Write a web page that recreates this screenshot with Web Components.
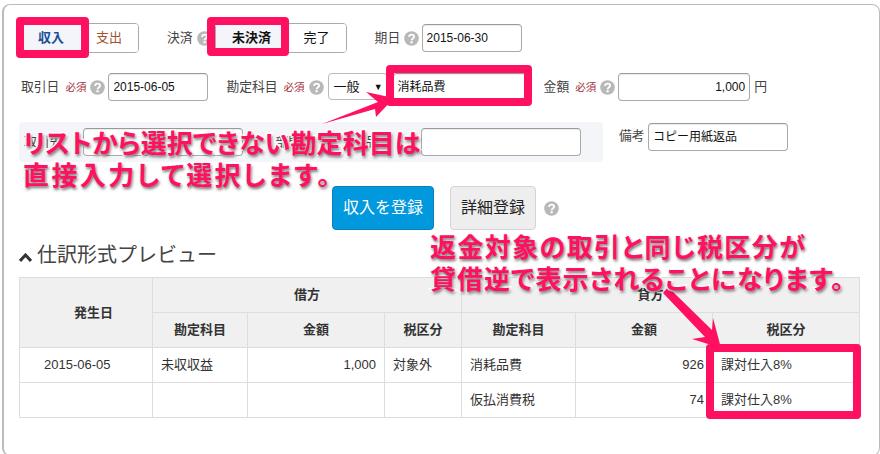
<!DOCTYPE html>
<html lang="ja">
<head>
<meta charset="utf-8">
<title>取引登録</title>
<style>
html,body{margin:0;padding:0;background:#fff;overflow:hidden}
body{width:880px;height:454px;font:13px/18px "Liberation Sans","Noto Sans CJK JP",sans-serif;color:#333}
</style>
</head>
<body>
<entry-screen>
  <ui-card>
    <form-row style="height:30px;margin-top:18px">
      <seg-group style="margin-left:2px">
        <seg-btn active tone="blue" w="58">収入</seg-btn>
        <seg-btn tone="brown" w="58">支出</seg-btn>
      </seg-group>
      <field-label style="margin-left:28px">決済</field-label><help-mark style="margin-left:4px"></help-mark>
      <seg-group style="margin-left:3px">
        <seg-btn active tone="black" w="72" bold>未決済</seg-btn>
        <seg-btn tone="black" w="58">完了</seg-btn>
      </seg-group>
      <field-label style="margin-left:28px">期日</field-label><help-mark style="margin-left:3.4px"></help-mark>
      <text-box w="100" style="margin-left:3px">2015-06-30</text-box>
    </form-row>
    <form-row style="height:28px;margin-top:20px">
      <field-label style="margin-left:2px">取引日</field-label><req-tag style="margin-left:6px"></req-tag><help-mark style="margin-left:4px"></help-mark>
      <text-box w="100" style="margin-left:3px">2015-06-05</text-box>
      <field-label style="margin-left:18px">勘定科目</field-label><req-tag style="margin-left:6px"></req-tag><help-mark style="margin-left:4px"></help-mark>
      <select-box style="margin-left:4px">一般</select-box>
      <text-box w="134" style="margin-left:5px">消耗品費</text-box>
      <field-label style="margin-left:17px">金額</field-label><req-tag style="margin-left:6px"></req-tag><help-mark style="margin-left:4px"></help-mark>
      <text-box w="132" right style="margin-left:3px">1,000</text-box>
      <field-label style="margin-left:4px">円</field-label>
    </form-row>
    <form-row style="height:40px;margin-top:21px;align-items:flex-start">
      <tint-panel>
        <field-label style="margin-left:5px">取引先</field-label>
        <text-box w="160" style="margin-left:21px"></text-box>
        <field-label style="margin-left:32px">部門</field-label>
        <field-label style="margin-left:64px">品目</field-label>
        <text-box w="160" style="margin-left:30px"></text-box>
      </tint-panel>
      <field-label style="margin-left:16px;margin-top:5px">備考</field-label>
      <text-box w="140" style="margin-left:3.4px;margin-top:1px">コピー用紙返品</text-box>
    </form-row>
    <form-row style="height:44px;margin-top:24px">
      <action-btn primary w="102" style="margin-left:313px">収入を登録</action-btn>
      <action-btn w="86" style="margin-left:16px">詳細登録</action-btn>
      <help-mark style="margin-left:8px"></help-mark>
    </form-row>
    <section-head>仕訳形式プレビュー</section-head>
    <journal-table style="margin-top:10px"></journal-table>
  </ui-card>
  <hl-box x="16" y="17" w="73" h="41"></hl-box>
  <hl-box x="207" y="17" w="82" h="39"></hl-box>
  <hl-box x="386" y="65" w="146" h="41"></hl-box>
  <hl-box x="706" y="344" w="155" h="75"></hl-box>
  <note-arrow points="322,124 378,102 366,92 394,98 376,117 375,109"></note-arrow>
  <note-arrow points="668,287 712,330 713,318 721,348 692,339 705,337 663,293"></note-arrow>
  <call-out x="23" y="126" pitch="32">
    <span style="letter-spacing:.1px">リストから選択できない勘定科目は</span>
    <span style="letter-spacing:2.4px">直接入力して選択します。</span>
  </call-out>
  <call-out x="430" y="229" pitch="33">
    <span style="letter-spacing:1.4px">返金対象の取引と同じ税区分が</span>
    <span style="letter-spacing:1px;margin-top:-1px">貸借逆で表示されることになります。</span>
  </call-out>
</entry-screen>
<script>
function def(name, css, html, init){
  customElements.define(name, class extends HTMLElement{
    constructor(){super();const s=this.attachShadow({mode:'open'});s.innerHTML='<style>'+css+'</style>'+html;}
    connectedCallback(){if(init)init(this,this.shadowRoot);}
  });
}
const FONT='"Liberation Sans","Noto Sans CJK JP",sans-serif';
def('entry-screen',':host{display:block;position:relative;width:880px;height:454px;overflow:hidden;font-family:'+FONT+'}','<slot></slot>');
def('ui-card',':host{display:block;box-sizing:border-box;margin:4px 0 0 2px;width:878px;height:452px;border:1px solid #bbb;border-width:1px 1px 1px 2px;border-radius:8px;padding:0 0 0 15px}','<slot></slot>');
def('form-row',':host{display:flex;align-items:center}','<slot></slot>');
def('seg-group',':host{display:inline-flex;flex:none;height:30px;box-sizing:border-box;border:1px solid #aaa;border-radius:4px;overflow:hidden}','<slot></slot>');
def('seg-btn',':host{display:flex;align-items:center;justify-content:center;box-sizing:border-box;height:100%;font-size:13px;line-height:18px;background:#fff}:host([active]){background:#f3f5fa;font-weight:700}:host([tone=blue]){color:#1b4f94}:host([tone=brown]){color:#a0522d}:host([tone=black]){color:#111}','<slot></slot>',(h)=>{h.style.width=h.getAttribute('w')+'px'});
def('field-label',':host{display:inline-block;flex:none;font-size:12.8px;line-height:18px;color:#444;white-space:nowrap}','<slot></slot>');
def('req-tag',':host{display:inline-block;flex:none;font-size:10.5px;line-height:14px;color:#a0303a;white-space:nowrap}','必須');
def('help-mark',':host{display:inline-flex;width:15px;height:15px;flex:none}svg{display:block}','<svg width="15" height="15" viewBox="0 0 15 15"><circle cx="7.5" cy="7.5" r="7.3" fill="#b8b8b8"/><path d="M5 5.8c.2-1.5 1.2-2.2 2.6-2.2s2.5.8 2.5 2c0 1.9-2.5 1.8-2.5 3.6" fill="none" stroke="#fff" stroke-width="1.9"/><rect x="6.5" y="10.2" width="2.2" height="2.1" fill="#fff"/></svg>');
def('text-box',':host{display:flex;align-items:center;flex:none;box-sizing:border-box;height:28px;padding:0 4px;font-size:12px;line-height:18px;color:#111;background:#fff;border:1px solid #aaa;border-top-color:#999;border-radius:4px;box-shadow:inset 0 1px 1px rgba(0,0,0,.08);white-space:nowrap}:host([right]){justify-content:flex-end}','<slot></slot>',(h)=>{h.style.width=h.getAttribute('w')+'px'});
def('select-box',':host{display:flex;align-items:center;justify-content:space-between;flex:none;box-sizing:border-box;width:60px;height:27px;margin-top:-1px;padding:0 4px 0 5px;font-size:13px;color:#111;background:#fff;border:1px solid #bbb;border-radius:4px}i{font-style:normal;font-size:9px}','<slot></slot><i>▼</i>');
def('tint-panel',':host{display:flex;align-items:center;flex:none;box-sizing:border-box;width:584px;height:40px;background:#f4f5f9;border-radius:4px}','<slot></slot>');
def('action-btn',':host{display:flex;align-items:center;justify-content:center;flex:none;box-sizing:border-box;height:44px;font-size:16px;line-height:22px;color:#222;background:#eee;border:1px solid #d4d4d4;border-radius:4px}:host([primary]){color:#fff;background:#0099dd;border-color:#0a7fb8}','<slot></slot>',(h)=>{h.style.width=h.getAttribute('w')+'px'});
def('section-head',':host{display:flex;align-items:center;height:24px;margin-top:13px;font-size:20px;line-height:24px;color:#444}svg{flex:none;margin:5px 5px 0 0}','<svg width="13" height="9" viewBox="0 0 13 9"><path d="M1 8l5.5-6L12 8" fill="none" stroke="#333" stroke-width="3"/></svg><slot></slot>');
def('journal-table',`:host{display:block;width:840px}
table{border-collapse:collapse;table-layout:fixed;width:840px;font-size:13px;color:#333}
td,th{border:1px solid #ddd;height:35px;padding:0 8px;box-sizing:border-box;line-height:18px}
th{background:#f0f0f0;font-weight:700;color:#333;text-align:center}
.num{text-align:right}`,`<table>
<colgroup><col style="width:133px"><col style="width:95px"><col style="width:137px"><col style="width:77px"><col style="width:114px"><col style="width:137px"><col style="width:147px"></colgroup>
<tr><th rowspan="2" style="padding-left:23px">発生日</th><th colspan="3">借方</th><th colspan="3" style="padding-right:28px">貸方</th></tr>
<tr><th>勘定科目</th><th>金額</th><th>税区分</th><th>勘定科目</th><th>金額</th><th>税区分</th></tr>
<tr><td style="padding-left:24px">2015-06-05</td><td>未収収益</td><td class="num">1,000</td><td>対象外</td><td>消耗品費</td><td class="num">926</td><td>課対仕入8%</td></tr>
<tr><td></td><td></td><td></td><td></td><td>仮払消費税</td><td class="num">74</td><td>課対仕入8%</td></tr>
</table>`);
def('hl-box',':host{position:absolute;box-sizing:border-box;border:8px solid #ff1060;border-radius:4px;pointer-events:none}','',(h)=>{
  for(const [a,p] of [['x','left'],['y','top'],['w','width'],['h','height']])h.style[p]=h.getAttribute(a)+'px';
});
def('note-arrow',':host{position:absolute;left:0;top:0;width:880px;height:454px;pointer-events:none}svg{display:block}','<svg width="880" height="454" viewBox="0 0 880 454"><polygon fill="#ff1060"/></svg>',(h,s)=>{
  s.querySelector('polygon').setAttribute('points',h.getAttribute('points'));
});
def('call-out',`:host{position:absolute;display:block;font-family:"Noto Sans CJK JP",sans-serif;font-size:26px;font-weight:700;color:#ff1060;white-space:nowrap;font-feature-settings:"palt"}
.w{display:flex;flex-direction:column}
::slotted(span){display:block;-webkit-text-stroke:3px #fff;paint-order:stroke fill;text-shadow:1px 2px 3px rgba(0,0,0,.55)}`,'<div class="w"><slot></slot></div>',(h)=>{
  h.style.left=h.getAttribute('x')+'px';h.style.top=h.getAttribute('y')+'px';h.style.lineHeight=h.getAttribute('pitch')+'px';
});
</script>
</body>
</html>
